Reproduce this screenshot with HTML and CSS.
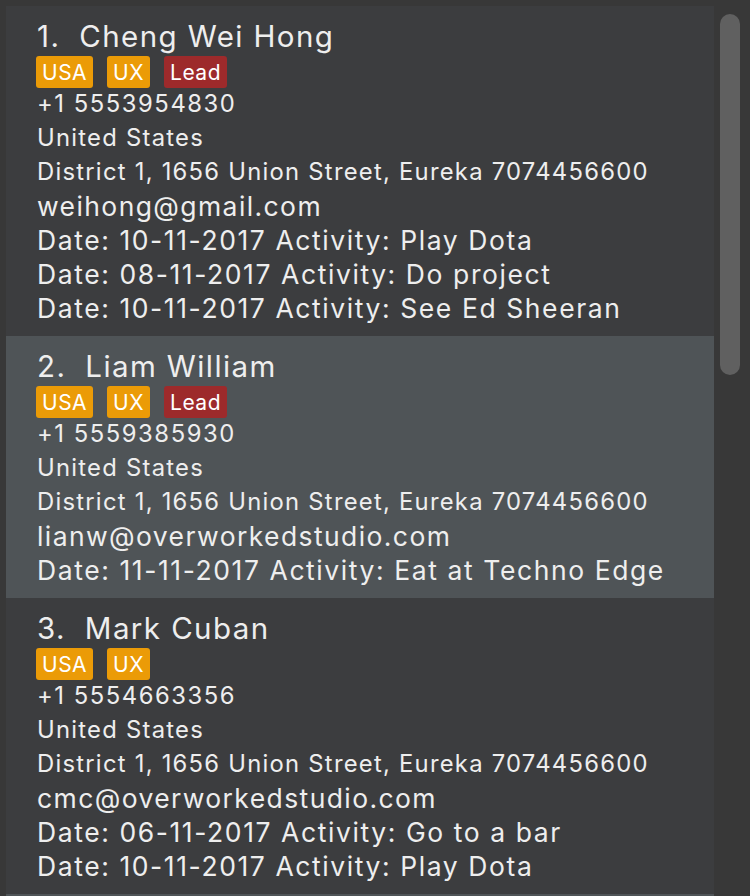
FILE: index.html
```html
<!DOCTYPE html>
<html>
<head>
<meta charset="utf-8">
<link rel="stylesheet" href="styles.css">
</head>
<body>
<div class="app">
  <div class="list">
    <div class="card">
      <div class="name"><span class="idx">1.</span>Cheng Wei Hong</div>
      <div class="tags"><span class="tag orange">USA</span><span class="tag orange">UX</span><span class="tag red">Lead</span></div>
      <div class="line small phone">+1 5553954830</div>
      <div class="line small">United States</div>
      <div class="line small">District 1, 1656 Union Street, Eureka 7074456600</div>
      <div class="line">weihong@gmail.com</div>
      <div class="line date">Date: 10-11-2017 Activity: Play Dota</div>
      <div class="line date">Date: 08-11-2017 Activity: Do project</div>
      <div class="line date">Date: 10-11-2017 Activity: See Ed Sheeran</div>
    </div>
    <div class="card alt">
      <div class="name"><span class="idx">2.</span>Liam William</div>
      <div class="tags"><span class="tag orange">USA</span><span class="tag orange">UX</span><span class="tag red">Lead</span></div>
      <div class="line small phone">+1 5559385930</div>
      <div class="line small">United States</div>
      <div class="line small">District 1, 1656 Union Street, Eureka 7074456600</div>
      <div class="line">lianw@overworkedstudio.com</div>
      <div class="line date">Date: 11-11-2017 Activity: Eat at Techno Edge</div>
    </div>
    <div class="card">
      <div class="name"><span class="idx">3.</span>Mark Cuban</div>
      <div class="tags"><span class="tag orange">USA</span><span class="tag orange">UX</span></div>
      <div class="line small phone">+1 5554663356</div>
      <div class="line small">United States</div>
      <div class="line small">District 1, 1656 Union Street, Eureka 7074456600</div>
      <div class="line">cmc@overworkedstudio.com</div>
      <div class="line date">Date: 06-11-2017 Activity: Go to a bar</div>
      <div class="line date">Date: 10-11-2017 Activity: Play Dota</div>
    </div>
    <div class="card alt"></div>
  </div>
  <div class="track"><div class="thumb"></div></div>
</div>
</body>
</html>
```
FILE: styles.css
```css
html, body {
  margin: 0;
  padding: 0;
  background: #383838;
  height: 896px;
  overflow: hidden;
}
body {
  font-family: Inter, "Noto Sans", sans-serif;
  color: #eeeeee;
}
.app {
  display: flex;
  padding: 6px 0 0 6px;
}
.list {
  width: 708px;
  display: flex;
  flex-direction: column;
}
.card {
  background: #3c3d3f;
  padding: 10px 0 11px 31px;
  min-height: 40px;
}
.card.alt {
  background: #4f5457;
}
.name {
  font-size: 29.5px;
  line-height: 40px;
  height: 40px;
  letter-spacing: 1.4px;
}
.idx {
  margin-right: 19px;
}
.tags {
  display: flex;
  gap: 14px;
  height: 32px;
  margin-left: -1px;
  margin-bottom: -1px;
}
.tag {
  display: flex;
  align-items: center;
  padding: 0 6px;
  border-radius: 3px;
  font-size: 21px;
  letter-spacing: 0.5px;
  color: #fff;
  height: 32px;
}
.tag.orange { background: #eb9b07; }
.tag.red { background: #9d2a2b; }
.line {
  font-size: 26.5px;
  line-height: 34px;
  height: 34px;
  letter-spacing: 1.4px;
  white-space: nowrap;
}
.line.date {
  letter-spacing: 1.58px;
}
.line.small {
  font-size: 23.8px;
  letter-spacing: 1.25px;
}
.line.small.phone {
  letter-spacing: 1.55px;
}
.track {
  margin-left: 6px;
  padding-top: 8px;
  width: 20px;
}
.thumb {
  width: 20px;
  height: 361px;
  border-radius: 10px;
  background: #606060;
}
```
